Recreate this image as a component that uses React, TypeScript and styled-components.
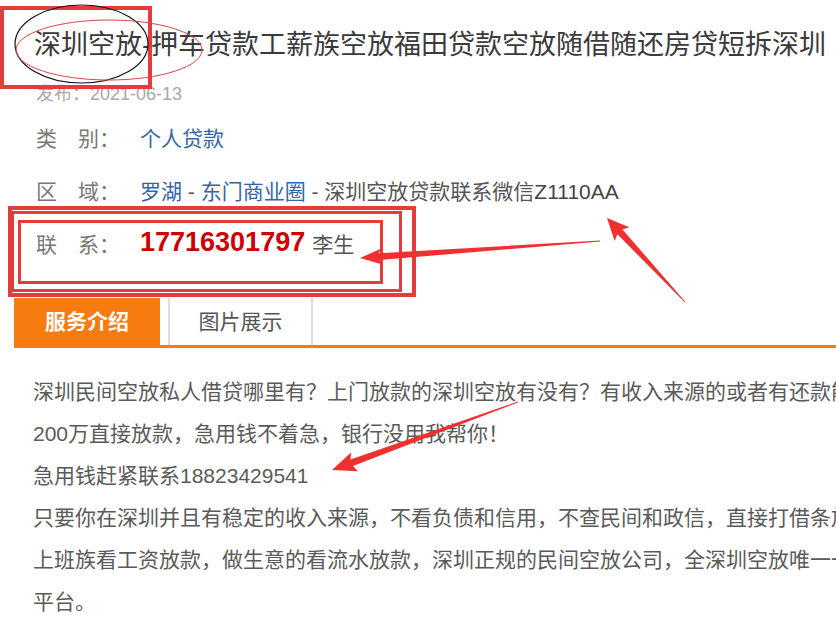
import styled, { createGlobalStyle } from "styled-components";

const GlobalStyle = createGlobalStyle`
  html, body {
    margin: 0;
    padding: 0;
    background: #fff;
    overflow: hidden;
  }
  body {
    font-family: "Liberation Sans", "Noto Sans CJK SC", sans-serif;
  }
`;

const Page = styled.div`
  position: relative;
  width: 836px;
  height: 618px;
  overflow: hidden;
  padding-left: 14px;
  box-sizing: border-box;
`;

const Header = styled.div`
  padding-left: 20px;
`;

const Title = styled.h1`
  margin: 0;
  padding-top: 27px;
  font-size: 27px;
  line-height: 36px;
  font-weight: normal;
  color: #3a3a3a;
  white-space: nowrap;
`;

const PostDate = styled.div`
  margin-top: 19px;
  padding-left: 2px;
  font-size: 18px;
  line-height: 24px;
  color: #aaa;
`;

const MetaList = styled.div`
  margin-top: 4px;
  padding-left: 2px;
`;

const MetaRow = styled.div`
  display: flex;
  align-items: center;
  height: 53px;
  font-size: 21px;
  white-space: nowrap;
`;

const Label = styled.span`
  width: 104px;
  flex: none;
  color: #777;
`;

const Value = styled.span`
  color: #555;
`;

const TextLink = styled.a`
  color: #3466a5;
  text-decoration: none;
`;

const Phone = styled.span`
  font-size: 27px;
  font-weight: bold;
  color: #cc0000;
  margin-right: 7px;
`;

const Wechat = styled.span`
  color: #444;
`;

const TabBar = styled.div`
  display: flex;
  margin-top: 29px;
  height: 47px;
  border-bottom: 3px solid #f77b0f;
`;

const Tab = styled.div<{ $active?: boolean }>`
  display: flex;
  align-items: center;
  justify-content: center;
  padding-bottom: 3px;
  width: ${(p) => (p.$active ? "146px" : "141px")};
  margin-left: ${(p) => (p.$active ? "0" : "8px")};
  font-size: 21px;
  font-weight: ${(p) => (p.$active ? "bold" : "normal")};
  color: ${(p) => (p.$active ? "#fff" : "#555")};
  background: ${(p) => (p.$active ? "#f77b0f" : "#fff")};
  border-left: ${(p) => (p.$active ? "none" : "2px solid #ddd")};
  border-right: ${(p) => (p.$active ? "none" : "2px solid #ddd")};
`;

const Content = styled.div`
  margin-top: 23px;
  padding-left: 19px;
  font-size: 21px;
  line-height: 42px;
  color: #5a5a5a;
`;

const Line = styled.div`
  white-space: nowrap;
`;

const Marks = styled.svg`
  position: absolute;
  left: 0;
  top: 0;
  pointer-events: none;
`;

type Pt = [number, number];

function arrowPoints(tail: Pt, tip: Pt, head: number, half: number, shaft: number, end: number) {
  const dx = tip[0] - tail[0];
  const dy = tip[1] - tail[1];
  const len = Math.hypot(dx, dy);
  const ux = dx / len;
  const uy = dy / len;
  const nx = -uy;
  const ny = ux;
  const bx = tip[0] - ux * head;
  const by = tip[1] - uy * head;
  const pts: Pt[] = [
    tip,
    [bx + nx * half, by + ny * half],
    [bx + ux * 3 + nx * shaft, by + uy * 3 + ny * shaft],
    [tail[0] + nx * end, tail[1] + ny * end],
    [tail[0] - nx * end, tail[1] - ny * end],
    [bx + ux * 3 - nx * shaft, by + uy * 3 - ny * shaft],
    [bx - nx * half, by - ny * half],
  ];
  return pts.map((p) => `${p[0].toFixed(1)},${p[1].toFixed(1)}`).join(" ");
}

const RED = "#e33c3c";

function Annotations() {
  return (
    <Marks width={836} height={618} viewBox="0 0 836 618">
      <rect x={2} y={8} width={148} height={79} fill="none" stroke={RED} strokeWidth={4} />
      <ellipse cx={81.5} cy={44} rx={66.5} ry={39} fill="none" stroke="#111" strokeWidth={1.2} />
      <ellipse cx={109} cy={50} rx={93} ry={30} fill="none" stroke="#d84848" strokeWidth={1} />

      <rect x={10} y={208} width={404} height={87} fill="none" stroke={RED} strokeWidth={4} />
      <rect x={12.5} y={212.5} width={388} height={78} fill="none" stroke={RED} strokeWidth={3} />
      <rect x={19.5} y={221.5} width={362} height={61} fill="none" stroke={RED} strokeWidth={3} />

      <polygon points={arrowPoints([600, 241], [360, 258], 22, 8, 3.5, 0.4)} fill="#f03030" />
      <polygon points={arrowPoints([685, 302], [607, 218], 22, 10, 3.5, 0.4)} fill="#f03030" />
      <polygon points={arrowPoints([518, 402], [332, 470], 24, 10, 3.5, 0.4)} fill="#f03030" />
    </Marks>
  );
}

export default function App() {
  return (
    <>
      <GlobalStyle />
      <Page>
        <Header>
          <Title>深圳空放-押车贷款工薪族空放福田贷款空放随借随还房贷短拆深圳</Title>
          <PostDate>发布：2021-06-13</PostDate>
          <MetaList>
            <MetaRow>
              <Label>类　别：</Label>
              <TextLink href="#">个人贷款</TextLink>
            </MetaRow>
            <MetaRow>
              <Label>区　域：</Label>
              <Value>
                <TextLink href="#">罗湖</TextLink> - <TextLink href="#">东门商业圈</TextLink> -
                深圳空放贷款联系微信<Wechat>Z1110AA</Wechat>
              </Value>
            </MetaRow>
            <MetaRow>
              <Label>联　系：</Label>
              <Phone>17716301797</Phone>
              <Value>李生</Value>
            </MetaRow>
          </MetaList>
        </Header>
        <TabBar>
          <Tab $active>服务介绍</Tab>
          <Tab>图片展示</Tab>
        </TabBar>
        <Content>
          <Line>深圳民间空放私人借贷哪里有？上门放款的深圳空放有没有？有收入来源的或者有还款能</Line>
          <Line>200万直接放款，急用钱不着急，银行没用我帮你！</Line>
          <Line>急用钱赶紧联系18823429541</Line>
          <Line>只要你在深圳并且有稳定的收入来源，不看负债和信用，不查民间和政信，直接打借条放</Line>
          <Line>上班族看工资放款，做生意的看流水放款，深圳正规的民间空放公司，全深圳空放唯一一</Line>
          <Line>平台。</Line>
        </Content>
        <Annotations />
      </Page>
    </>
  );
}
